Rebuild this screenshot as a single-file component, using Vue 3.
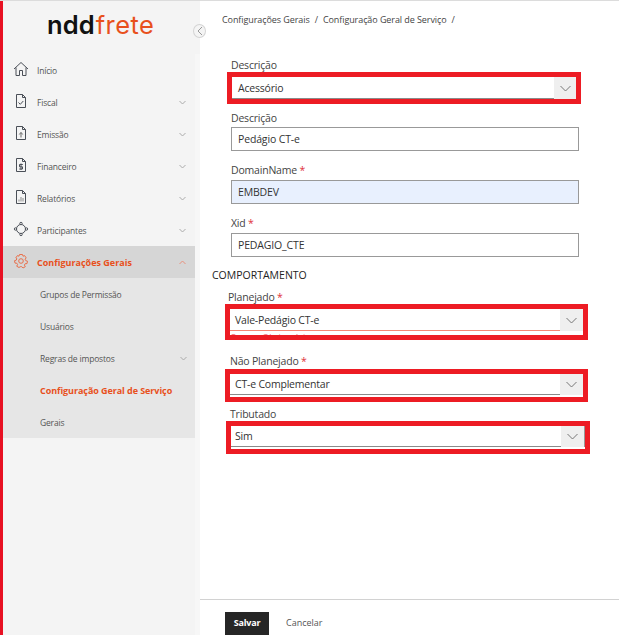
<script setup>
const menu = [
  { label: 'Início', icon: 'home' },
  { label: 'Fiscal', icon: 'check', chevron: true },
  { label: 'Emissão', icon: 'up', chevron: true },
  { label: 'Financeiro', icon: 'money', chevron: true },
  { label: 'Relatórios', icon: 'chart', chevron: true },
  { label: 'Participantes', icon: 'org', chevron: true },
]
const subs = [
  { label: 'Grupos de Permissão' },
  { label: 'Usuários' },
  { label: 'Regras de impostos', chevron: true },
  { label: 'Configuração Geral de Serviço', active: true },
  { label: 'Gerais' },
]
</script>

<template>
  <div class="page">
    <aside class="sidebar">
      <div class="logo"><span class="ndd">ndd</span><span class="frete">frete</span></div>
      <button class="collapse">
        <svg width="8" height="10" viewBox="0 0 8 10"><path d="M6 1 2 5l4 4" fill="none" stroke="#999" /></svg>
      </button>
      <div class="nav-wrap">
        <nav class="nav">
          <div v-for="m in menu" :key="m.label" class="item">
            <svg class="icon" width="16" height="18" viewBox="0 0 16 18" fill="none" stroke="#4a4f57" stroke-width="1">
              <template v-if="m.icon === 'home'">
                <path d="M1 9 8 2.500 15 9M3 7.500V15.500h3.500v-5h3v5H13V7.500" />
              </template>
              <template v-else-if="m.icon === 'org'">
                <circle cx="8" cy="9" r="4.500" /><circle cx="8" cy="3.500" r="1.200" fill="#f4f4f4" /><circle cx="8" cy="14.500" r="1.200" fill="#f4f4f4" /><circle cx="2.500" cy="9" r="1.200" fill="#f4f4f4" /><circle cx="13.500" cy="9" r="1.200" fill="#f4f4f4" />
              </template>
              <template v-else>
                <path d="M3.500 2.500h6l3 3v10h-9zM9.500 2.500v3h3" />
                <path v-if="m.icon === 'check'" d="m5.500 10.500 1.800 1.800 3-3.300" />
                <path v-if="m.icon === 'up'" d="M8 13.500V9M6.300 10.500 8 8.300l1.700 2.200" stroke="#6b6b6b" />
                <path v-if="m.icon === 'money'" d="M9.800 8.500H6.500v2.300h3v2.200H6.200M8 7.500v6.500" />
                <path v-if="m.icon === 'chart'" d="M6 13.500v-2M8 13.500V9M10 13.500v-3.500" stroke="#8a8a8a" />
              </template>
            </svg>
            <span class="label">{{ m.label }}</span>
            <svg v-if="m.chevron" class="chev" width="7" height="5" viewBox="0 0 7 5"><path d="m.5 1 3 3 3-3" fill="none" stroke="#aaa" /></svg>
          </div>
          <div class="item open">
            <svg class="icon" width="16" height="18" viewBox="0 0 16 18" fill="none" stroke="#e8704c" stroke-width="1">
              <circle cx="8" cy="9" r="2.300" />
              <path d="M6.500 2.500h3l.5 1.700 1.600-.6 1.600 2.300-1.100 1.300.7 1.500 1.700.5-.5 2.400-1.800.1-.8 1.400.9 1.600-2.300 1.300-1.200-1.300H7.200L6 15.500l-2.300-1.300.9-1.600-.8-1.400-1.800-.1-.5-2.400 1.700-.5.700-1.500L2.800 5.900l1.600-2.300 1.600.6z" />
            </svg>
            <span class="label">Configurações Gerais</span>
            <svg class="chev" width="7" height="5" viewBox="0 0 7 5"><path d="m.5 4 3-3 3 3" fill="none" stroke="#e8907c" /></svg>
          </div>
          <div class="subs">
            <div v-for="s in subs" :key="s.label" class="sub" :class="{ active: s.active }">
              <span>{{ s.label }}</span>
              <svg v-if="s.chevron" class="chev" width="7" height="5" viewBox="0 0 7 5"><path d="m.5 1 3 3 3-3" fill="none" stroke="#aaa" /></svg>
            </div>
          </div>
        </nav>
      </div>
    </aside>

    <main class="main">
      <div class="crumbs">
        <span>Configurações Gerais</span><i>/</i><span>Configuração Geral de Serviço</span><i>/</i>
      </div>

      <form class="form" @submit.prevent>
        <label class="lbl first">Descrição</label>
        <div class="mark m1">
          <div class="select"><span class="val">Acessório</span><span class="arrow"><svg width="11" height="7" viewBox="0 0 11 7"><path d="m.5 1 5 5 5-5" fill="none" stroke="#777" /></svg></span></div>
        </div>

        <label class="lbl l2">Descrição</label>
        <input class="input" value="Pedágio CT-e" readonly />

        <label class="lbl l3">DomainName <b>*</b></label>
        <input class="input filled" value="EMBDEV" readonly />

        <label class="lbl l3">Xid <b>*</b></label>
        <input class="input" value="PEDAGIO_CTE" readonly />

        <h2 class="section">COMPORTAMENTO</h2>

        <label class="lbl l4">Planejado <b>*</b></label>
        <div class="mark m2">
          <div class="select err"><span class="val">Vale-Pedágio CT-e</span><span class="arrow"><svg width="11" height="7" viewBox="0 0 11 7"><path d="m.5 1 5 5 5-5" fill="none" stroke="#777" /></svg></span></div>
          <div class="errtext">Campo Obrigatório</div>
        </div>

        <label class="lbl l5">Não Planejado <b>*</b></label>
        <div class="mark m3">
          <div class="select"><span class="val">CT-e Complementar</span><span class="arrow"><svg width="11" height="7" viewBox="0 0 11 7"><path d="m.5 1 5 5 5-5" fill="none" stroke="#777" /></svg></span></div>
        </div>

        <label class="lbl l6">Tributado</label>
        <div class="mark m4">
          <div class="select"><span class="val">Sim</span><span class="arrow"><svg width="11" height="7" viewBox="0 0 11 7"><path d="m.5 1 5 5 5-5" fill="none" stroke="#777" /></svg></span></div>
        </div>
      </form>

      <footer class="footer">
        <button class="save">Salvar</button>
        <button class="cancel">Cancelar</button>
      </footer>
    </main>
  </div>
</template>

<style>
html, body { margin: 0; background: #fff; }
</style>

<style scoped>
* { box-sizing: border-box; }
.page {
  width: 619px; height: 635px; display: flex; overflow: hidden;
  border-top: 1px solid #dcdcdc;
  font-family: "Open Sans", "Noto Sans", sans-serif; color: #333;
}
.sidebar {
  width: 200px; flex: none; position: relative; background: #f4f4f4;
  border-left: 3px solid #e81123; display: flex; flex-direction: column;
}
.logo { height: 53px; flex: none; padding: 7px 0 0 44px; font-family: Inter, sans-serif; font-size: 25.500px; line-height: 34px; white-space: nowrap; }
.ndd { font-weight: 600; color: #111; letter-spacing: .1px; }
.frete { font-weight: 400; color: #e8501c; margin-left: 1px; letter-spacing: .4px; }
.collapse {
  position: absolute; left: 190px; top: 23px; width: 13px; height: 14px; padding: 0;
  border: 1px solid #d4d4d4; border-radius: 50%; background: #f4f4f4;
  display: flex; align-items: center; justify-content: center;
}
.nav-wrap { flex: 1; background: #f7f7f7; }
.nav { width: 192px; height: 100%; background: #f4f4f4; }
.item { height: 32px; display: flex; align-items: center; padding-left: 10px; padding-right: 9px; font-size: 8.500px; letter-spacing: -.18px; color: #555; }
.icon { flex: none; margin-right: 8px; margin-bottom: 3px; }
.label { flex: 1; }
.chev { flex: none; }
.open { background: #d6d6d6; color: #e8501c; font-weight: 700; font-size: 9px; letter-spacing: 0; }
.subs { background: #e6e6e6; }
.sub { height: 32px; display: flex; align-items: center; justify-content: space-between; padding: 0 8px 0 37px; font-size: 8.500px; letter-spacing: -.18px; color: #555; }
.sub.active { color: #e8501c; font-weight: 700; font-size: 9px; letter-spacing: -.07px; }
.main { flex: 1; display: flex; flex-direction: column; min-width: 0; }
.crumbs { padding: 11px 0 0 22px; height: 55px; flex: none; font-size: 9px; letter-spacing: -.08px; line-height: 15px; color: #444; white-space: nowrap; }
.crumbs i { font-style: normal; margin: 0 5px; }
.form { flex: 1; display: flex; flex-direction: column; align-items: flex-start; min-height: 0; }
.lbl { font-size: 10.500px; letter-spacing: -.2px; line-height: 14px; color: #444; margin-left: 31px; }
.lbl b { color: #e0303a; font-weight: 400; }
.first { margin-top: 2px; height: 14px; }
.l2 { margin-top: 7px; height: 16px; }
.l3 { margin-top: 12px; height: 17px; }
.l4 { margin-top: 7px; height: 15px; line-height: 16px; margin-left: 28px; }
.l5 { margin-top: 14px; height: 15px; margin-left: 30px; }
.l6 { margin-top: 5px; height: 14px; margin-left: 30px; }
.input {
  display: block; margin-left: 31px; width: 348px; height: 24px; padding: 0 6px;
  border: 1px solid #999; background: #fff; font: inherit; font-size: 10.500px; letter-spacing: -.15px; color: #333; outline: none;
}
.filled { background: #e8f0fe; }
.section { margin: 11px 0 0 12px; font-size: 10.500px; line-height: 14px; font-weight: 400; color: #222; height: 14px; }
.mark { border: 5px solid #ed1c24; background: #fff; overflow: hidden; }
.m1 { margin-left: 27px; width: 354px; height: 32px; }
.m2 { margin-left: 25px; width: 363px; height: 36px; }
.m3 { margin-left: 25px; width: 363px; height: 33px; }
.m4 { margin-left: 26px; width: 364px; height: 33px; }
.select { display: flex; height: 22px; }
.m3 .select, .m4 .select { height: 21px; }
.val { flex: 1; font-size: 10.500px; letter-spacing: -.2px; line-height: 23px; padding-left: 5px; border-bottom: 1px solid #8a8a8a; color: #333; }
.m3 .val, .m4 .val { line-height: 20px; }
.m1 .val { padding-left: 6px; }
.m4 .val { padding-left: 4px; }
.arrow { width: 23px; flex: none; background: #efefef; display: flex; align-items: center; justify-content: center; }
.m1 .arrow { width: 22px; }
.m4 .arrow { width: 24px; border-right: 1px solid #999; }
.err .val { border-bottom-color: #f58573; }
.errtext { color: #f0707a; font-size: 9px; line-height: 12px; margin-top: 1px; }
.footer { height: 36px; flex: none; border-top: 1px solid #d2d2d2; display: flex; align-items: flex-start; padding: 12px 0 0 25px; }
.save { width: 44px; height: 24px; background: #262626; color: #fff; border: 0; font: inherit; font-size: 9px; font-weight: 700; letter-spacing: -.2px; padding: 0 0 4px; }
.cancel { margin-left: 17px; height: 24px; border: 0; background: none; font: inherit; font-size: 9px; color: #555; padding: 0 0 4px; }
</style>
